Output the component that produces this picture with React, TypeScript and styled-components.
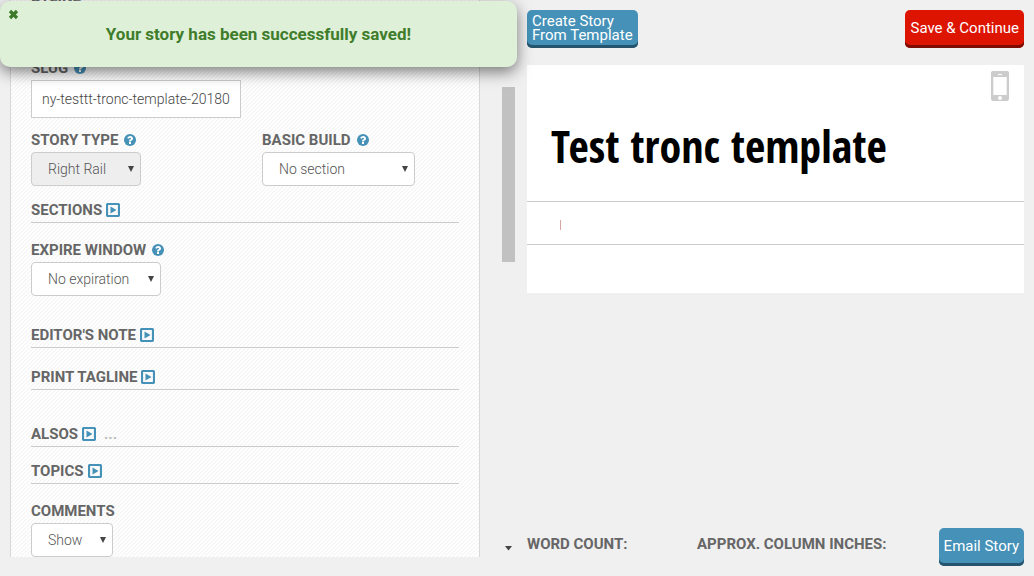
import React from "react";
import styled, { createGlobalStyle, css } from "styled-components";

const GlobalStyle = createGlobalStyle`
  * { box-sizing: border-box; }
  body {
    margin: 0;
    background: #f0f0f0;
    color: #666;
    font-family: Roboto, "Liberation Sans", sans-serif;
    font-size: 15px;
  }
  button, input, select { font-family: inherit; }
`;

const Page = styled.div`
  display: grid;
  grid-template-columns: 1fr 1fr;
  min-height: 100vh;
`;

const EditColumn = styled.div`
  display: flex;
  padding: 0 2px 19px 10px;
  gap: 22px;
  overflow: hidden;
`;

const Panel = styled.form`
  flex: 1;
  min-width: 0;
  /* the panel is scrolled so that its first field is partly out of view */
  margin-top: -13px;
  padding: 0 20px;
  border: solid #d8d8d8;
  border-width: 0 1px;
  background: linear-gradient(135deg, #fff 25%, #f7f7f7 25% 50%, #fff 50% 75%, #f7f7f7 75%) 0 0 / 4px 4px;
`;

const ScrollTrack = styled.div`
  display: flex;
  flex-direction: column;
  justify-content: space-between;
  align-items: center;
  width: 13px;
  padding: 87px 0 6px;
`;

const ScrollThumb = styled.div`
  width: 13px;
  height: 175px;
  background: #c1c1c1;
`;

const Field = styled.div<{ $gap?: number }>`
  margin-top: ${(p) => p.$gap ?? 0}px;
`;

const FieldRow = styled.div`
  display: grid;
  grid-template-columns: 231px auto;
  justify-content: start;
  margin-top: 12px;
`;

const LabelRow = styled.div`
  display: flex;
  align-items: center;
  gap: 6px;
  height: 20px;
  margin-bottom: 2px;
`;

const labelText = css`
  font-size: 15px;
  font-weight: 700;
  line-height: 20px;
  text-transform: uppercase;
  white-space: nowrap;
  color: #666;
`;

const Label = styled.label`
  ${labelText}
`;

const Stat = styled.span`
  ${labelText}
`;

const TextInput = styled.input`
  display: block;
  width: 210px;
  height: 38px;
  padding: 0 10px;
  border: 1px solid #ccc;
  background: #fff;
  color: #444;
  font-size: 14px;
  font-weight: 300;
`;

const SelectBox = styled.div<{ $width: number }>`
  position: relative;
  width: ${(p) => p.$width}px;

  svg {
    position: absolute;
    right: 7px;
    top: 14px;
    pointer-events: none;
  }
`;

const Select = styled.select`
  appearance: none;
  display: block;
  width: 100%;
  height: 34px;
  padding: 0 16px;
  border: 1px solid #ccc;
  border-radius: 4px;
  background: #fff;
  color: #555;
  font-size: 14px;
  font-weight: 300;
  opacity: 1;

  &:disabled {
    background: #eee;
  }
`;

const Section = styled.section<{ $gap: number }>`
  display: flex;
  align-items: center;
  gap: 4px;
  height: 23px;
  margin-top: ${(p) => p.$gap}px;
  padding-bottom: 2px;
  border-bottom: 1px solid #ccc;
`;

const SectionTitle = styled.h2`
  margin: 0;
  ${labelText}
`;

const IconButton = styled.button`
  display: flex;
  padding: 0;
  border: 0;
  background: none;
  cursor: pointer;
`;

const Ellipsis = styled.span`
  margin-left: 4px;
  color: #bbb;
  font-weight: 700;
`;

const PreviewColumn = styled.main`
  display: flex;
  flex-direction: column;
  padding: 10px;
`;

const Toolbar = styled.div`
  display: flex;
  justify-content: space-between;
  margin-bottom: 17px;
`;

const ActionButton = styled.button<{ $danger?: boolean }>`
  height: 38px;
  padding: 0 5px 2px;
  border: 0;
  border-radius: 5px;
  background: ${(p) => (p.$danger ? "#dd1400" : "#4591b8")};
  box-shadow: inset 0 -3px 0 ${(p) => (p.$danger ? "#7c0b00" : "#27546d")};
  color: #fff;
  font-size: 15px;
  line-height: 14px;
  text-align: left;
  white-space: nowrap;
  cursor: pointer;
`;

const Story = styled.article`
  display: flex;
  flex-direction: column;
  background: #fff;
`;

const StoryTop = styled.div`
  display: flex;
  justify-content: flex-end;
  padding: 5px 14px 0 0;
`;

const Headline = styled.h1`
  margin: 0;
  padding: 15px 24px 25px;
  color: #000;
  font-family: "Open Sans Condensed", "Noto Sans Condensed", "Liberation Sans Narrow", "Open Sans", sans-serif;
  font-size: 44px;
  font-weight: 700;
  line-height: 60px;
  white-space: nowrap;
`;

const Byline = styled.div`
  display: flex;
  align-items: center;
  height: 44px;
  padding: 3px 33px 0;
  border: solid #ccc;
  border-width: 1px 0;
`;

const Caret = styled.span`
  width: 1px;
  height: 10px;
  background: #d9a5a5;
`;

const StoryBody = styled.div`
  height: 48px;
`;

const Footer = styled.footer`
  display: grid;
  grid-template-columns: 170px 1fr auto;
  align-items: start;
  margin-top: auto;

  ${Stat} {
    margin-top: 6px;
  }
`;

const Toast = styled.div`
  position: absolute;
  top: 1px;
  left: 0;
  width: 50%;
  height: 66px;
  border-radius: 10px;
  background: #dff0d8;
  box-shadow: 0 5px 15px rgba(0, 0, 0, 0.5);
  color: #3f7d2b;
  font-size: 17px;
  font-weight: 700;
  line-height: 66px;
  text-align: center;
`;

const CloseButton = styled(IconButton)`
  position: absolute;
  top: 8px;
  left: 8px;
`;

const HelpIcon = () => (
  <svg width="12" height="12" viewBox="0 0 1536 1536" aria-hidden="true">
    <circle cx="768" cy="768" r="768" fill="#4591b8" />
    <path
      fill="#fff"
      d="M896 1248v-192q0-14-9-23t-23-9H672q-14 0-23 9t-9 23v192q0 14 9 23t23 9h192q14 0 23-9t9-23zM1152 576q0-88-55.500-163T958 297t-170-41q-243 0-371 213-15 24 8 42l132 100q7 6 19 6 16 0 25-12 53-68 86-92 34-24 86-24 48 0 85.500 26t37.500 59q0 38-20 61t-68 45q-63 28-115.500 86.500T640 892v36q0 14 9 23t23 9h192q14 0 23-9t9-23q0-19 21.500-49.500T972 829q32-18 49-28.500t46-35 44.500-48 28-60.500 12.500-81z"
    />
  </svg>
);

const ExpandIcon = () => (
  <svg width="14" height="14" viewBox="0 0 14 14" aria-hidden="true">
    <rect x="1" y="1" width="12" height="12" rx="1.200" fill="none" stroke="#4591b8" strokeWidth="2.200" />
    <path d="M4.500 3.500v7l6-3.500z" fill="#4591b8" />
  </svg>
);

const ArrowIcon = () => (
  <svg width="6" height="6" viewBox="0 0 6 6" aria-hidden="true">
    <path d="M0 0h6L3 6z" fill="#444" />
  </svg>
);

const ScrollArrow = () => (
  <svg width="8" height="5" viewBox="0 0 8 5" aria-hidden="true">
    <path d="M0 0h7L3.500 4.500z" fill="#444" />
  </svg>
);

const CloseIcon = () => (
  <svg width="11" height="11" viewBox="0 0 11 11" aria-hidden="true">
    <path d="M2 2l7 7M9 2l-7 7" stroke="#3c7a29" strokeWidth="3.200" />
  </svg>
);

const PhoneIcon = () => (
  <svg width="20" height="31" viewBox="0 0 20 31" aria-hidden="true">
    <path
      fill="#ccc"
      fillRule="evenodd"
      d="M3 1h14a2 2 0 0 1 2 2v26a2 2 0 0 1-2 2H3a2 2 0 0 1-2-2V3a2 2 0 0 1 2-2zM3.300 7v18h13.400V7zM8 4v1h4V4zM10 26a2 2 0 1 0 0 4 2 2 0 0 0 0-4z"
    />
  </svg>
);

type DropdownProps = {
  id: string;
  label: string;
  value: string;
  width: number;
  gap?: number;
  help?: boolean;
  disabled?: boolean;
};

const Dropdown = ({ id, label, value, width, gap, help, disabled }: DropdownProps) => (
  <Field $gap={gap}>
    <LabelRow>
      <Label htmlFor={id}>{label}</Label>
      {help && <HelpIcon />}
    </LabelRow>
    <SelectBox $width={width}>
      <Select id={id} disabled={disabled}>
        <option>{value}</option>
      </Select>
      <ArrowIcon />
    </SelectBox>
  </Field>
);

const Collapsible = ({ title, gap, more }: { title: string; gap: number; more?: boolean }) => (
  <Section $gap={gap}>
    <SectionTitle>{title}</SectionTitle>
    <IconButton type="button" aria-label={title}>
      <ExpandIcon />
    </IconButton>
    {more && <Ellipsis>...</Ellipsis>}
  </Section>
);

export default function App() {
  return (
    <>
      <GlobalStyle />
      <Page>
        <EditColumn>
          <Panel>
            <Field>
              <LabelRow>
                <Label htmlFor="byline">Byline</Label>
              </LabelRow>
              <TextInput id="byline" />
            </Field>
            <Field $gap={11}>
              <LabelRow>
                <Label htmlFor="slug">Slug</Label>
                <HelpIcon />
              </LabelRow>
              <TextInput id="slug" defaultValue="ny-testtt-tronc-template-20180" />
            </Field>
            <FieldRow>
              <Dropdown id="type" label="Story Type" value="Right Rail" width={110} help disabled />
              <Dropdown id="build" label="Basic Build" value="No section" width={153} help />
            </FieldRow>
            <Collapsible title="Sections" gap={14} />
            <Dropdown id="expire" label="Expire Window" value="No expiration" width={130} gap={17} help />
            <Collapsible title="Editor's Note" gap={29} />
            <Collapsible title="Print Tagline" gap={19} />
            <Collapsible title="Alsos" gap={34} more />
            <Collapsible title="Topics" gap={14} />
            <Dropdown id="comments" label="Comments" value="Show" width={82} gap={17} />
          </Panel>
          <ScrollTrack>
            <ScrollThumb />
            <ScrollArrow />
          </ScrollTrack>
        </EditColumn>
        <PreviewColumn>
          <Toolbar>
            <ActionButton type="button">
              Create Story
              <br />
              From Template
            </ActionButton>
            <ActionButton type="button" $danger>
              Save &amp; Continue
            </ActionButton>
          </Toolbar>
          <Story>
            <StoryTop>
              <IconButton type="button" aria-label="Mobile preview">
                <PhoneIcon />
              </IconButton>
            </StoryTop>
            <Headline>Test tronc template</Headline>
            <Byline>
              <Caret />
            </Byline>
            <StoryBody />
          </Story>
          <Footer>
            <Stat>Word Count:</Stat>
            <Stat>Approx. Column Inches:</Stat>
            <ActionButton type="button">Email Story</ActionButton>
          </Footer>
        </PreviewColumn>
      </Page>
      <Toast role="status">
        <CloseButton type="button" aria-label="Close">
          <CloseIcon />
        </CloseButton>
        Your story has been successfully saved!
      </Toast>
    </>
  );
}
